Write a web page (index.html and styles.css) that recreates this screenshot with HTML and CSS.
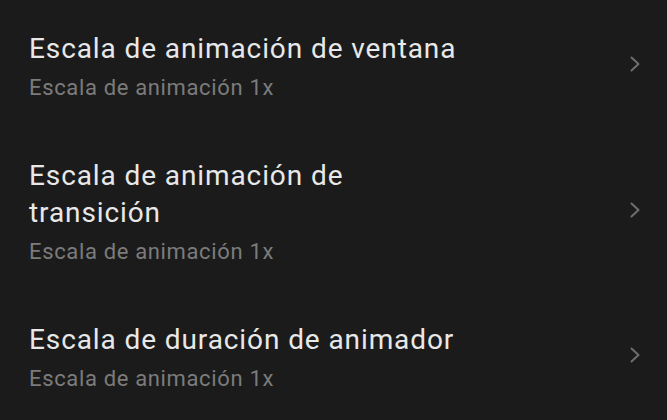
FILE: index.html
```html
<!DOCTYPE html>
<html lang="es">
<head>
<meta charset="utf-8">
<link rel="stylesheet" href="styles.css">
</head>
<body>
<div class="list">
  <div class="row">
    <div class="text">
      <div class="title">Escala de animación de ventana</div>
      <div class="sub">Escala de animación 1x</div>
    </div>
    <svg class="chev" width="10" height="16" viewBox="0 0 10 16"><path d="M1.5 1.5 L8.5 8 L1.5 14.5" fill="none" stroke="#6e6e6e" stroke-width="2" stroke-linecap="round" stroke-linejoin="round"/></svg>
  </div>
  <div class="row">
    <div class="text">
      <div class="title">Escala de animación de<br>transición</div>
      <div class="sub">Escala de animación 1x</div>
    </div>
    <svg class="chev" width="10" height="16" viewBox="0 0 10 16"><path d="M1.5 1.5 L8.5 8 L1.5 14.5" fill="none" stroke="#6e6e6e" stroke-width="2" stroke-linecap="round" stroke-linejoin="round"/></svg>
  </div>
  <div class="row">
    <div class="text">
      <div class="title">Escala de duración de animador</div>
      <div class="sub">Escala de animación 1x</div>
    </div>
    <svg class="chev" width="10" height="16" viewBox="0 0 10 16"><path d="M1.5 1.5 L8.5 8 L1.5 14.5" fill="none" stroke="#6e6e6e" stroke-width="2" stroke-linecap="round" stroke-linejoin="round"/></svg>
  </div>
</div>
</body>
</html>
```
FILE: styles.css
```css
html, body {
  margin: 0;
  background: #1b1b1b;
  height: 100%;
  overflow: hidden;
}
body {
  font-family: Roboto, "Noto Sans", sans-serif;
}
.list {
  padding-top: 2px;
}
.row {
  display: flex;
  align-items: center;
  padding: 28px 27px 27px 29px;
}
.text {
  flex: 1;
}
.title {
  color: #e8e8e8;
  font-size: 28px;
  line-height: 37px;
  letter-spacing: 0.9px;
}
.sub {
  color: #7b7b7b;
  font-size: 22px;
  line-height: 28px;
  letter-spacing: 0.65px;
  margin-top: 7px;
}
.chev {
  flex: none;
  margin-bottom: 4px;
}
```
